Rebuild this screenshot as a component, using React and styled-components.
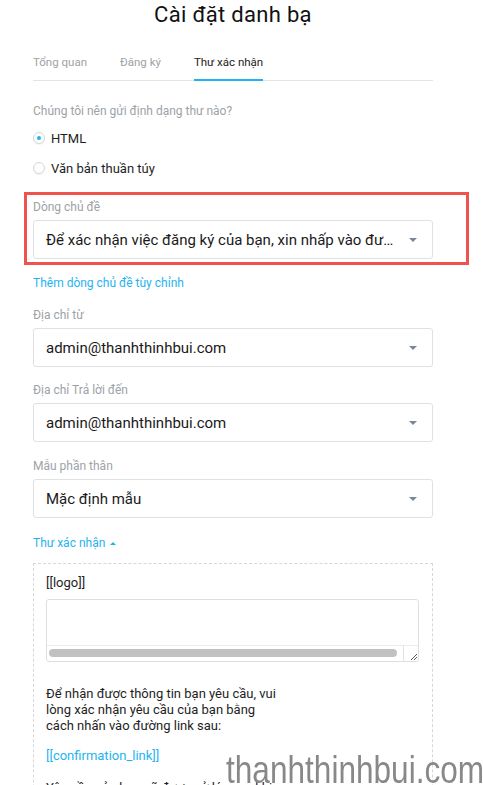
import React, { useState } from "react";
import styled, { createGlobalStyle } from "styled-components";

const GlobalStyle = createGlobalStyle`
  body {
    margin: 0;
    background: #fff;
    font-family: Roboto, "Noto Sans", sans-serif;
    color: #1e1e1e;
    overflow: hidden;
  }
`;

const blue = "#1fb4f0";
const muted = "#9da2a7";

const Page = styled.div`
  width: 400px;
  padding: 0 50px 0 33px;
`;

const Title = styled.h1`
  margin: 0;
  font-size: 22px;
  font-weight: 400;
  line-height: 30px;
  text-align: center;
  letter-spacing: 0.3px;
  color: #111;
`;

const TabBar = styled.div`
  display: flex;
  gap: 33px;
  margin-top: 24px;
  border-bottom: 1px solid #e2e4e7;
`;

const Tab = styled.div`
  font-size: 11.5px;
  line-height: 16px;
  padding-bottom: 9px;
  margin-bottom: -1px;
  color: ${(p) => (p.$active ? "#222" : muted)};
  border-bottom: 2px solid ${(p) => (p.$active ? blue : "transparent")};
`;

const Section = styled.div`
  margin-top: 22px;
`;

const Label = styled.div`
  font-size: 12px;
  line-height: 16px;
  color: ${muted};
  margin-bottom: ${(p) => p.$gap || 5}px;
`;

const RadioRow = styled.label`
  display: flex;
  align-items: center;
  gap: 6px;
  height: 30px;
  font-size: 13px;
  color: #1e1e1e;
  cursor: pointer;
`;

const RadioDot = styled.span`
  width: 10px;
  height: 10px;
  border-radius: 50%;
  border: 1px solid #d3d6da;
  box-shadow: 0 1px 1px rgba(0, 0, 0, 0.06);
  display: flex;
  align-items: center;
  justify-content: center;

  &::after {
    content: "";
    width: 4px;
    height: 4px;
    border-radius: 50%;
    background: ${(p) => (p.$on ? blue : "transparent")};
  }
`;

const Highlight = styled.div`
  margin: 9px -36px 0 -9px;
  padding: 4px 33px 3px 6px;
  border: 3px solid #f0534b;
`;

const Field = styled.div`
  margin-top: ${(p) => p.$top || 0}px;
`;

const Select = styled.div`
  height: 39px;
  box-sizing: border-box;
  border: 1px solid #dfe1e4;
  border-radius: 3px;
  display: flex;
  align-items: center;
  padding: 0 15px 0 12px;
  gap: 12px;
  font-size: 15px;
  color: #1a1a1a;
`;

const SelectText = styled.span`
  flex: 1;
  white-space: nowrap;
  overflow: hidden;
  text-overflow: ellipsis;
`;

const Caret = styled.span`
  width: 0;
  height: 0;
  border-left: 4px solid transparent;
  border-right: 4px solid transparent;
  border-top: 4px solid #7a8796;
`;

const Link = styled.a`
  display: flex;
  align-items: center;
  gap: 5px;
  margin-top: ${(p) => p.$top || 0}px;
  font-size: 12px;
  line-height: 16px;
  color: ${blue};
  text-decoration: none;
  cursor: pointer;
`;

const UpCaret = styled.span`
  width: 0;
  height: 0;
  border-left: 3px solid transparent;
  border-right: 3px solid transparent;
  border-bottom: 3px solid ${blue};
`;

const Preview = styled.div`
  margin-top: 12px;
  border: 1px dashed #d7d7d7;
  padding: 11px 13px 40px 12px;
  font-size: 13px;
  line-height: 16px;
`;

const Editor = styled.div`
  margin-top: 8px;
  height: 63px;
  box-sizing: border-box;
  border: 1px solid #dedede;
  border-radius: 3px;
  display: flex;
  flex-direction: column;
  overflow: hidden;
`;

const EditorBlank = styled.div`
  flex: 1;
`;

const ScrollRow = styled.div`
  display: flex;
  height: 15px;
  border-top: 1px solid #ececec;
`;

const Thumb = styled.div`
  flex: 1;
  margin: 3px 6px 4px 2px;
  border-radius: 4px;
  background: #c1c1c1;
`;

const Grip = styled.div`
  width: 14px;
  border-left: 1px solid #e2e2e2;
  display: flex;
  align-items: flex-end;
  justify-content: flex-end;
`;

const Paragraph = styled.p`
  margin: ${(p) => p.$top || 0}px 0 0;
  width: 240px;
  color: ${(p) => (p.$link ? blue : "#1e1e1e")};
`;

const Watermark = styled.div`
  position: fixed;
  left: 226px;
  top: 750px;
  font-family: "Liberation Sans", Arial, sans-serif;
  font-size: 39px;
  line-height: 39px;
  color: #888;
  transform: scaleX(0.81);
  transform-origin: left top;
  white-space: nowrap;
  pointer-events: none;
`;

const SelectField = ({ label, value, top }) => (
  <Field $top={top}>
    <Label>{label}</Label>
    <Select>
      <SelectText>{value}</SelectText>
      <Caret />
    </Select>
  </Field>
);

export default function App() {
  const [format, setFormat] = useState("html");

  return (
    <Page>
      <GlobalStyle />
      <Title>Cài đặt danh bạ</Title>

      <TabBar>
        <Tab>Tổng quan</Tab>
        <Tab>Đăng ký</Tab>
        <Tab $active>Thư xác nhận</Tab>
      </TabBar>

      <Section>
        <Label $gap={4}>Chúng tôi nên gửi định dạng thư nào?</Label>
        <RadioRow onClick={() => setFormat("html")}>
          <RadioDot $on={format === "html"} />
          HTML
        </RadioRow>
        <RadioRow onClick={() => setFormat("text")}>
          <RadioDot $on={format === "text"} />
          Văn bản thuần túy
        </RadioRow>
      </Section>

      <Highlight>
        <SelectField
          label="Dòng chủ đề"
          value="Để xác nhận việc đăng ký của bạn, xin nhấp vào đường link sau"
        />
      </Highlight>

      <Link $top={10}>Thêm dòng chủ đề tùy chỉnh</Link>

      <SelectField top={16} label="Địa chỉ từ" value="admin@thanhthinhbui.com" />
      <SelectField top={15} label="Địa chỉ Trả lời đến" value="admin@thanhthinhbui.com" />
      <SelectField top={16} label="Mẫu phần thân" value="Mặc định mẫu" />

      <Link $top={17}>
        Thư xác nhận <UpCaret />
      </Link>

      <Preview>
        <div>[[logo]]</div>
        <Editor>
          <EditorBlank />
          <ScrollRow>
            <Thumb />
            <Grip>
              <svg width="10" height="10" viewBox="0 0 10 10">
                <path d="M9 3 L3 9 M9 6 L6 9" stroke="#555" strokeWidth="1" />
              </svg>
            </Grip>
          </ScrollRow>
        </Editor>
        <Paragraph $top={24}>
          Để nhận được thông tin bạn yêu cầu, vui lòng xác nhận yêu cầu của bạn
          bằng cách nhấn vào đường link sau:
        </Paragraph>
        <Paragraph $top={14} $link>
          [[confirmation_link]]
        </Paragraph>
        <Paragraph $top={16}>
          Yêu cầu của bạn sẽ được xử lý ngay khi bạn xác nhận.
        </Paragraph>
      </Preview>

      <Watermark>thanhthinhbui.com</Watermark>
    </Page>
  );
}
